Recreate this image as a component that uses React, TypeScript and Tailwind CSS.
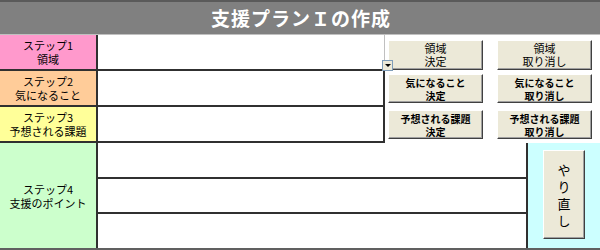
import React from 'react';

const font = { fontFamily: '"MS PGothic", "Noto Sans CJK JP", sans-serif' };

function XpButton({ lines, className = '' }: { lines: string[]; className?: string }) {
  return (
    <button
      className={`bg-[#ece9d8] border border-t-[#ffffff] border-l-[#ffffff] border-r-[#404040] border-b-[#404040] shadow-[inset_-1px_-1px_0_#a0a0a0] flex items-center justify-center leading-[13px] text-black text-center ${className}`}
    >
      <span>
        {lines[0]}
        <br />
        {lines[1]}
      </span>
    </button>
  );
}

const steps = [
  { no: 'ステップ1', name: '領域', bg: 'bg-[#ff99cc]', h: 'h-[37px]', btn: '領域', size: 'text-[11px]', btnH: 'h-[30px]', pt: 'pt-[5px]', dropdown: true },
  { no: 'ステップ2', name: '気になること', bg: 'bg-[#ffcc99]', h: 'h-[36px]', btn: '気になること', size: 'text-[10px] font-bold', btnH: 'h-[29px]', pt: 'pt-[3px]', dropdown: false },
  { no: 'ステップ3', name: '予想される課題', bg: 'bg-[#ffff99]', h: 'h-[36px]', btn: '予想される課題', size: 'text-[10px] font-bold', btnH: 'h-[29px]', pt: 'pt-[3px]', dropdown: false },
];

export default function App() {
  return (
    <div className="w-[600px] h-[250px] bg-white overflow-hidden flex flex-col" style={font}>
      {/* Title bar */}
      <div className="h-[34px] shrink-0 bg-[#808080] border-t-2 border-[#5a5a5a] flex items-center justify-center">
        <h1 className="text-white text-[19px] font-bold tracking-[1px] pl-[2px]">支援プランＩの作成</h1>
      </div>

      {/* Steps 1-3 */}
      {steps.map((s, i) => (
        <div key={s.no} className={`flex ${s.h} shrink-0 ${i === 0 ? 'border-t border-[#c0c0c0]' : ''}`}>
          <div className={`w-[98px] shrink-0 ${s.bg} border-r-2 border-b-2 border-[#303030] flex items-center justify-center text-center text-[11px] leading-[14px] text-black`}>
            <span>
              {s.no}
              <br />
              {s.name}
            </span>
          </div>
          <div className={`w-[287px] shrink-0 relative border-b-2 ${i === 0 ? 'border-r border-r-[#c0c0c0] border-b-[#303030]' : 'border-r-2 border-[#303030]'}`}>
            {s.dropdown && (
              <div className="absolute right-[-9px] bottom-[-2px] w-[11px] h-[11px] bg-[#ece9d8] border border-[#7f9db9] flex items-center justify-center">
                <span className="block w-0 h-0 border-l-[3px] border-r-[3px] border-t-[3px] border-l-transparent border-r-transparent border-t-black" />
              </div>
            )}
          </div>
          <div className={`flex-1 flex items-start gap-[14px] pl-[3px] ${s.pt}`}>
            <XpButton lines={[s.btn, '決定']} className={`w-[95px] ${s.btnH} ${s.size}`} />
            <XpButton lines={[s.btn, '取り消し']} className={`w-[95px] ${s.btnH} ${s.size}`} />
          </div>
        </div>
      ))}

      {/* Step 4 */}
      <div className="flex flex-1 border-b-2 border-[#606060]">
        <div className="w-[98px] shrink-0 bg-[#ccffcc] border-r-2 border-[#303030] flex items-center justify-center text-center text-[11px] leading-[14px] text-black">
          <span>
            ステップ4
            <br />
            支援のポイント
          </span>
        </div>
        <div className="w-[430px] shrink-0 flex flex-col border-r-2 border-[#303030]">
          <div className="flex-1 border-b-2 border-[#303030]" />
          <div className="flex-1 border-b-2 border-[#303030]" />
          <div className="flex-1" />
        </div>
        <div className="flex-1 bg-[#ccffff] pl-[15px] pt-[7px]">
          <button className="w-[42px] h-[89px] bg-[#ece9d8] border border-t-[#ffffff] border-l-[#ffffff] border-r-[#404040] border-b-[#404040] shadow-[inset_-1px_-1px_0_#a0a0a0] flex items-center justify-center text-center text-[13px] leading-[17px] text-black">
            <span>
              や<br />り<br />直<br />し
            </span>
          </button>
        </div>
      </div>
    </div>
  );
}
